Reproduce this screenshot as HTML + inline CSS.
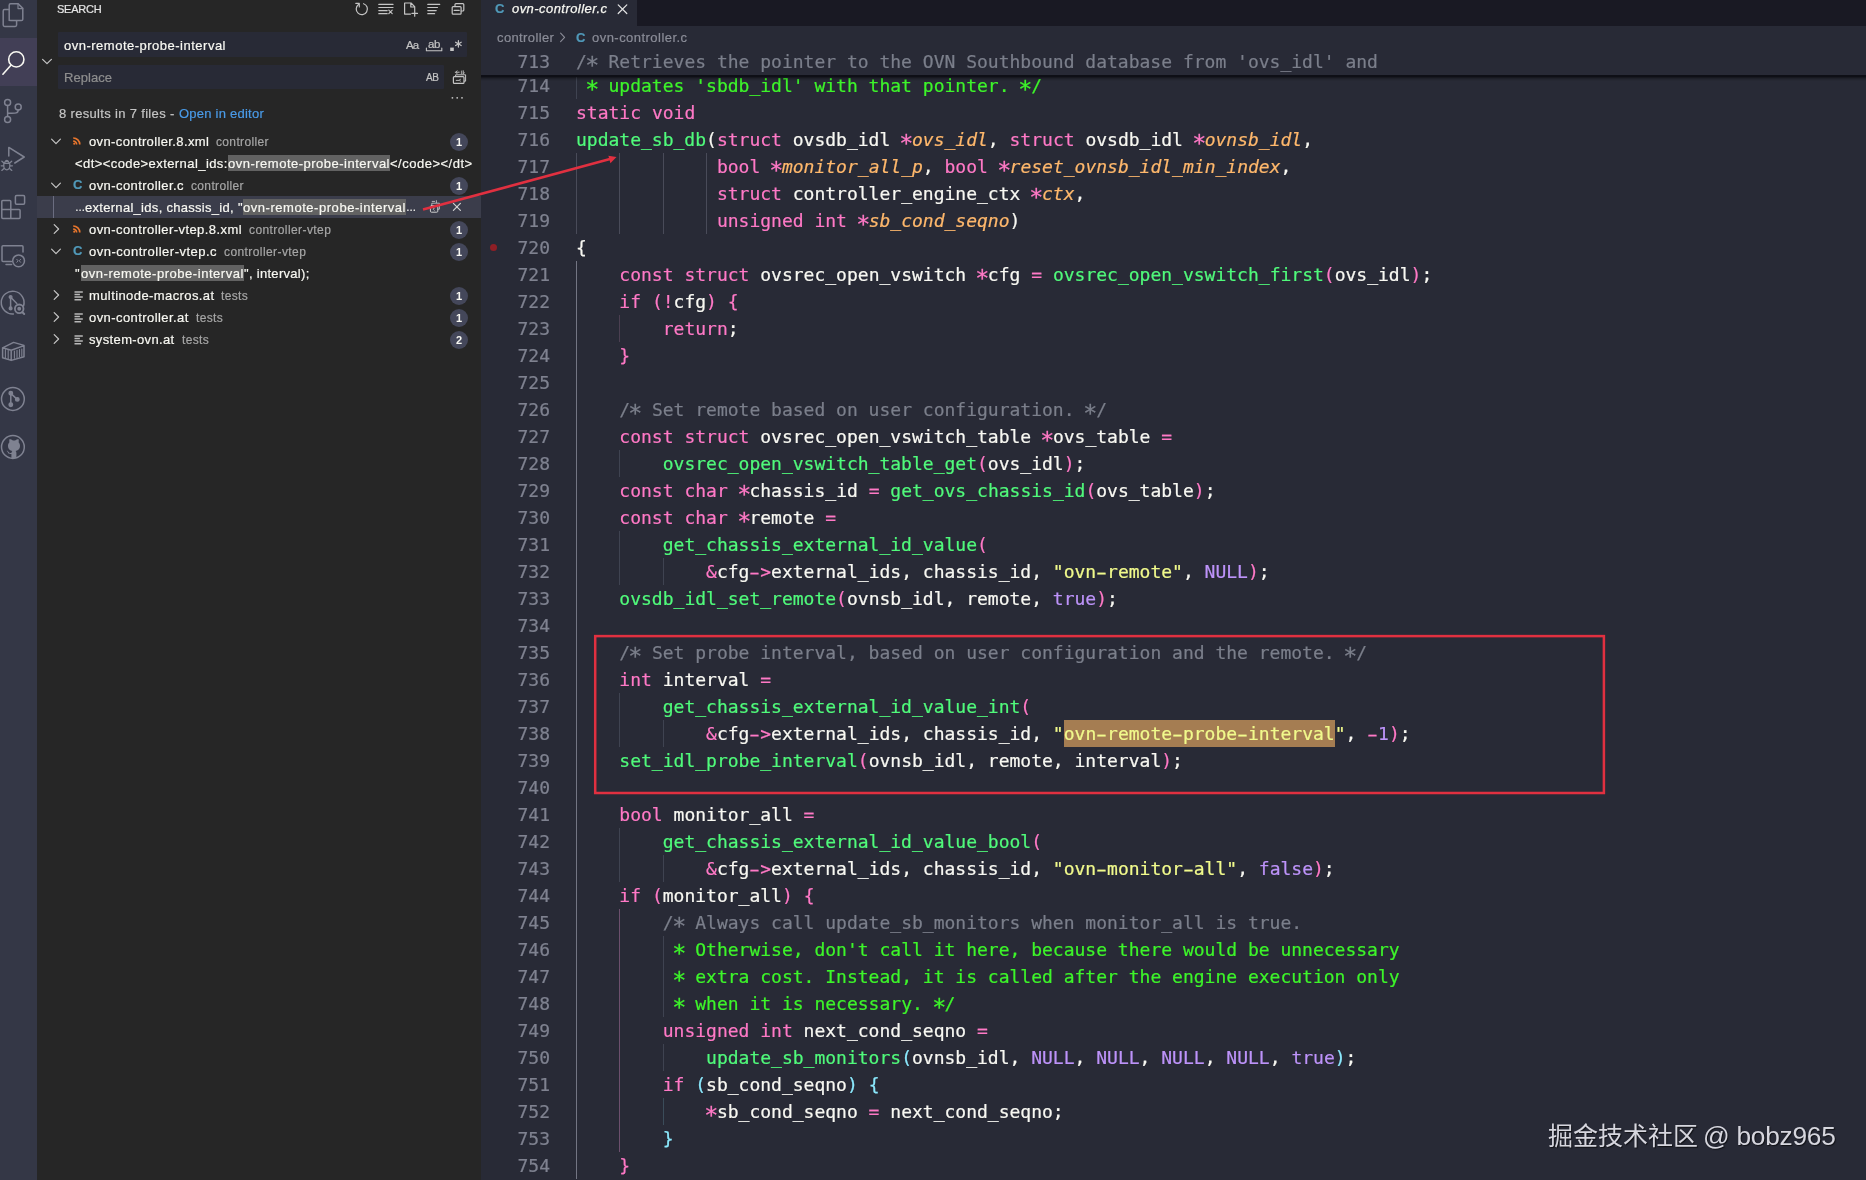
<!DOCTYPE html>
<html lang="en">
<head>
<meta charset="utf-8">
<title>ovn-controller.c</title>
<style>
*{box-sizing:border-box;margin:0;padding:0}
html,body{width:1866px;height:1180px;overflow:hidden;background:#282a36}
body{position:relative;font-family:"Liberation Sans","Noto Sans CJK SC",sans-serif;font-size:13px;color:#f8f8f2}
.abs{position:absolute}
/* activity bar */
#act{position:absolute;left:0;top:0;width:37px;height:1180px;background:#343746}
#act .sel{position:absolute;left:0;top:38px;width:37px;height:48px;background:#423f56}
#act svg{position:absolute;left:0;overflow:visible}
/* sidebar */
#side{position:absolute;left:37px;top:0;width:443.500px;height:1180px;background:#262626}
.t{-webkit-text-stroke:0.2px;position:absolute;white-space:pre;line-height:22px;height:22px;will-change:transform}
.badge{will-change:transform;font-weight:bold;position:absolute;left:413px;width:18px;height:18px;border-radius:9px;background:#44475a;color:#f8f8f2;font-size:11px;line-height:18px;text-align:center}
/* editor */
.ln{-webkit-text-stroke:0.22px;will-change:transform;position:absolute;left:0;width:1866px;height:27px;line-height:27px;white-space:pre;font-family:"DejaVu Sans Mono","Liberation Mono",monospace;font-size:18px;color:#f8f8f2}
.ln .no{position:absolute;left:481px;width:69px;text-align:right;color:#7f8290}
.ln .cd{position:absolute;left:576px}
.k{color:#ff79c6}.f{color:#50fa7b}.s{color:#f1fa8c}.c{color:#bd93f9}.m{color:#7b7f8b}.g{color:#3df52a}
.p{color:#ffb86c;font-style:italic}.b1{color:#f8f8f2}.b2{color:#ff79c6}.b3{color:#8be9fd}
.hy{display:inline-block;transform:scaleX(1.7)}.as{display:inline-block;transform:translateY(2.6px) scale(1.3)}
.gd{position:absolute;width:1px;display:block}
.g0{background:#3f4351}.g0b{background:#494b59}.g1{background:#737583}.g2{background:#6c4f6d}.g2f{background:#4b3f51}.g3{background:#3b4c5a}
</style>
</head>
<body>
<div id="act">
<div class="sel"></div>
<svg width="37" height="480" viewBox="0 0 37 480" fill="none" stroke="#7f8291" stroke-width="1.5" stroke-linejoin="round" stroke-linecap="round">
<!-- files -->
<path d="M9.2 20.6V5.2a1.4 1.4 0 0 1 1.4-1.4h7.6l4.6 4.6v10.8a1.4 1.4 0 0 1-1.4 1.4H10.6a1.4 1.4 0 0 1-1.4-1.4z"/>
<path d="M18 3.9v4.7h4.7" stroke-width="1.2"/>
<path d="M9 9.6H4.6A1.4 1.4 0 0 0 3.2 11v14a1.4 1.4 0 0 0 1.4 1.4h10.6a1.4 1.4 0 0 0 1.4-1.4v-4.3"/>
<!-- search (active) -->
<g stroke="#f8f8f2" stroke-width="1.6"><circle cx="16.3" cy="59.4" r="7.6"/><path d="M10.9 65.2L2.9 74.2"/></g>
<!-- scm -->
<circle cx="7.6" cy="102.4" r="3"/><circle cx="18.2" cy="106.9" r="3"/><circle cx="7.6" cy="119.5" r="3"/>
<path d="M7.6 105.4v11.1M18.2 109.9c0 3.6-3 3.4-10.4 3.4"/>
<!-- debug -->
<path d="M8.8 156V147.4L24.2 157 14.8 163"/>
<g stroke-width="1.3"><ellipse cx="6.8" cy="165.6" rx="3.1" ry="4.2"/><path d="M4.2 163.4h5.2M3.7 165.8H1.2M3.9 163l-2-1.8M4 168.4l-2.2 2M9.9 165.8h2.5M9.7 163l2-1.8M9.6 168.4l2.2 2M5.2 161.6a1.7 1.7 0 0 1 3.2 0"/></g>
<!-- extensions -->
<path d="M1.8 201.4a1 1 0 0 1 1-1h7a1 1 0 0 1 1 1v8h8.300a1 1 0 0 1 1 1v7a1 1 0 0 1-1 1H2.800a1 1 0 0 1-1-1zM1.800 209.400h9v9"/>
<rect x="15.400" y="195.600" width="9.200" height="8.600" rx="1.200"/>
<!-- remote explorer -->
<path d="M23 252V246.800a1 1 0 0 0-1-1H3a1 1 0 0 0-1 1V260.500a1 1 0 0 0 1 1h8.500M6 264.600h5.600"/>
<circle cx="18.600" cy="260.800" r="5.900"/>
<path d="M16.800 259.300l1.300 1.500-1.300 1.500M20.600 259.300l-1.300 1.500 1.300 1.500" stroke-width="1"/>
<!-- gitlens inspect -->
<path d="M23.600 305.800A11.400 11.400 0 1 0 13.400 314"/>
<circle cx="10.600" cy="297" r="1.300" fill="#7f8291"/><circle cx="10.600" cy="308.400" r="1.300" fill="#7f8291"/>
<path d="M10.600 297v11.400M11 297.600l5.800 6"/>
<circle cx="19.200" cy="308.800" r="4.300" stroke-width="1.800"/><circle cx="19.200" cy="308.800" r="1.200" fill="#7f8291"/>
<path d="M22.400 312.200l1.800 1.800" stroke-width="2"/>
<!-- container -->
<path d="M2.600 347.800L13.600 342.400 24 345.400V356.800L11.200 360.400 2.600 357.800zM2.600 347.800L11.200 350.200 24 345.600M11.200 350.200V360.200"/>
<path d="M5.400 349.600v8M8.200 350.400v8.400M14.400 351v7.200M17 350.300v7.200M19.500 349.600v7.200M21.800 349v7.200" stroke-width="1.100"/>
<!-- git graph -->
<circle cx="12.900" cy="399" r="11.400"/>
<circle cx="10.800" cy="393.200" r="1.700" fill="#7f8291"/><circle cx="10.800" cy="404.800" r="1.700" fill="#7f8291"/><circle cx="17.300" cy="399.400" r="1.700" fill="#7f8291"/>
<path d="M10.800 393.200v11.600M11 393.600l6.200 5.800"/>
<!-- github -->
<circle cx="12.900" cy="447" r="11.400"/>
<path fill="#7f8291" stroke="none" d="M12.900 440.600c-.9-.5-2.200-1.400-3.300-1.500-.5 1.100-.5 2.200-.2 3.100-.9 1-1.400 2.200-1.400 3.600 0 3.600 2.100 4.800 4.300 5.200-.5.500-.7 1.100-.8 1.800-.8.300-2.300.4-3.100-1.100-.5-.9-1.400-.9-1.400-.9-.8 0 0 .5 0 .5.600.3.900 1.300.9 1.300.5 1.600 2.500 1.500 3.500 1.300v4.400h5v-5.400c0-.8-.3-1.500-.8-1.900 2.300-.4 4.400-1.600 4.400-5.200 0-1.400-.5-2.600-1.400-3.600.3-.9.300-2-.2-3.100-1.100.1-2.400 1-3.300 1.500-.7-.2-1.500-.2-2.200 0z"/>
</svg>
</div>

<div id="side"></div>
<div class="abs" style="left:37px;top:196px;width:443.500px;height:22px;background:#3b3d4b"></div>
<div class="abs" style="left:53px;top:196px;width:1px;height:22px;background:#6b6d80"></div>
<div class="abs" style="left:57.500px;top:32.300px;width:409.800px;height:24.700px;background:#282a36;border-radius:1px"></div>
<div class="abs" style="left:57.500px;top:64.800px;width:386px;height:24.200px;background:#282a36;border-radius:1px"></div>
<div class="abs" style="left:228.2px;top:155.0px;width:162.0px;height:16px;background:#626262"></div>
<div class="abs" style="left:243.0px;top:199.0px;width:163.0px;height:16px;background:#626262"></div>
<div class="abs" style="left:81.0px;top:265.0px;width:162.9px;height:16px;background:#626262"></div>
<div class="badge" style="left:449.5px;top:133px">1</div>
<div class="badge" style="left:449.5px;top:177px">1</div>
<div class="badge" style="left:449.5px;top:221px">1</div>
<div class="badge" style="left:449.5px;top:243px">1</div>
<div class="badge" style="left:449.5px;top:287px">1</div>
<div class="badge" style="left:449.5px;top:309px">1</div>
<div class="badge" style="left:449.5px;top:331px">2</div>
<div class="t " style="left:57.1px;top:-2.3px;font-size:11px;color:#e6e6e6;height:22px;line-height:22px;letter-spacing:-0.224px;">SEARCH</div>
<div class="t " style="left:64.3px;top:34.5px;font-size:13px;color:#f8f8f2;height:22px;line-height:22px;letter-spacing:0.497px;">ovn-remote-probe-interval</div>
<div class="t " style="left:64.3px;top:67.0px;font-size:13px;color:#8e8e8e;height:22px;line-height:22px;letter-spacing:0.042px;">Replace</div>
<div class="t " style="left:59.2px;top:103.0px;font-size:13px;color:#c4c4c4;height:22px;line-height:22px;letter-spacing:0.326px;">8 results in 7 files - </div>
<div class="t " style="left:178.8px;top:103.0px;font-size:13px;color:#4a9be8;height:22px;line-height:22px;letter-spacing:0.238px;">Open in editor</div>
<div class="t " style="left:89.3px;top:131.0px;font-size:13px;color:#f8f8f2;height:22px;line-height:22px;letter-spacing:0.379px;">ovn-controller.8.xml</div>
<div class="t " style="left:216.0px;top:130.7px;font-size:12px;color:#a6a6a6;height:22px;line-height:22px;letter-spacing:0.344px;">controller</div>
<div class="t " style="left:89.3px;top:175.0px;font-size:13px;color:#f8f8f2;height:22px;line-height:22px;letter-spacing:0.421px;">ovn-controller.c</div>
<div class="t " style="left:190.9px;top:174.7px;font-size:12px;color:#a6a6a6;height:22px;line-height:22px;letter-spacing:0.344px;">controller</div>
<div class="t " style="left:89.3px;top:219.0px;font-size:13px;color:#f8f8f2;height:22px;line-height:22px;letter-spacing:0.427px;">ovn-controller-vtep.8.xml</div>
<div class="t " style="left:248.7px;top:218.7px;font-size:12px;color:#a6a6a6;height:22px;line-height:22px;letter-spacing:0.418px;">controller-vtep</div>
<div class="t " style="left:89.3px;top:241.0px;font-size:13px;color:#f8f8f2;height:22px;line-height:22px;letter-spacing:0.491px;">ovn-controller-vtep.c</div>
<div class="t " style="left:223.5px;top:240.7px;font-size:12px;color:#a6a6a6;height:22px;line-height:22px;letter-spacing:0.418px;">controller-vtep</div>
<div class="t " style="left:89.3px;top:285.0px;font-size:13px;color:#f8f8f2;height:22px;line-height:22px;letter-spacing:0.406px;">multinode-macros.at</div>
<div class="t " style="left:221.2px;top:284.7px;font-size:12px;color:#a6a6a6;height:22px;line-height:22px;letter-spacing:0.331px;">tests</div>
<div class="t " style="left:89.3px;top:307.0px;font-size:13px;color:#f8f8f2;height:22px;line-height:22px;letter-spacing:0.429px;">ovn-controller.at</div>
<div class="t " style="left:195.5px;top:306.7px;font-size:12px;color:#a6a6a6;height:22px;line-height:22px;letter-spacing:0.331px;">tests</div>
<div class="t " style="left:89.3px;top:329.0px;font-size:13px;color:#f8f8f2;height:22px;line-height:22px;letter-spacing:0.360px;">system-ovn.at</div>
<div class="t " style="left:181.9px;top:328.7px;font-size:12px;color:#a6a6a6;height:22px;line-height:22px;letter-spacing:0.331px;">tests</div>
<div class="t " style="left:75.4px;top:153.0px;font-size:13px;color:#f8f8f2;height:22px;line-height:22px;letter-spacing:0.421px;">&lt;dt&gt;&lt;code&gt;external_ids:</div>
<div class="t mh" style="left:228.2px;top:153.0px;font-size:13px;color:#f8f8f2;height:22px;line-height:22px;letter-spacing:0.497px;">ovn-remote-probe-interval</div>
<div class="t " style="left:390.2px;top:153.0px;font-size:13px;color:#f8f8f2;height:22px;line-height:22px;letter-spacing:0.498px;">&lt;/code&gt;&lt;/dt&gt;</div>
<div class="t " style="left:75.0px;top:197.0px;font-size:10.2px;color:#f8f8f2;height:22px;line-height:22px;">…</div>
<div class="t " style="left:85.2px;top:197.0px;font-size:13px;color:#f8f8f2;height:22px;line-height:22px;letter-spacing:0.294px;">external_ids, chassis_id, "</div>
<div class="t mh" style="left:243.0px;top:197.0px;font-size:13px;color:#f8f8f2;height:22px;line-height:22px;letter-spacing:0.537px;">ovn-remote-probe-interval</div>
<div class="t " style="left:405.6px;top:197.0px;font-size:10.2px;color:#f8f8f2;height:22px;line-height:22px;">…</div>
<div class="t " style="left:75.4px;top:263.0px;font-size:13px;color:#f8f8f2;height:22px;line-height:22px;letter-spacing:0.975px;">"</div>
<div class="t mh" style="left:81.0px;top:263.0px;font-size:13px;color:#f8f8f2;height:22px;line-height:22px;letter-spacing:0.533px;">ovn-remote-probe-interval</div>
<div class="t " style="left:243.9px;top:263.0px;font-size:13px;color:#f8f8f2;height:22px;line-height:22px;letter-spacing:0.301px;">", interval);</div>
<svg class="abs" style="left:37px;top:0" width="444" height="360" viewBox="37 0 444 360" fill="none" stroke="#c5c5c5" stroke-width="1.2" stroke-linecap="round" stroke-linejoin="round">
<!-- toolbar: refresh -->
<path d="M358.500 4.500A5.600 5.600 0 1 0 363.600 3.700"/><path d="M355.800 3.400H359.300V6.900" stroke-width="1.100"/>
<!-- clear results -->
<path d="M378.800 4.400h14.200M378.800 7.500h14.200M378.800 10.600h8.400M378.800 13.700h8.400M388.800 10.200l3.400 3.400M392.200 10.200l-3.400 3.400"/>
<!-- new file -->
<path d="M410.500 14.100H404.600V3h6.400l3.700 3.700v3.500M410.800 3.200v3.800h3.800M414.700 10.600v5.600M411.900 13.400h5.600"/>
<!-- view as list -->
<path d="M427.800 4.400h11.900M427.800 7.500h9.700M427.800 10.600h8.400M427.800 13.700h6.800"/>
<!-- collapse all -->
<path d="M455 6.400V4.600a1 1 0 0 1 1-1h6.800a1 1 0 0 1 1 1v5.400a1 1 0 0 1-1 1h-1.600"/>
<rect x="452.200" y="6.600" width="8.900" height="7.600" rx="1"/><path d="M454.200 10.400h5"/>
<!-- toggle replace chevron -->
<path d="M42.600 59.300l4.400 4.400 4.400-4.400" stroke-width="1.200"/>
<!-- match word underline bracket -->
<path d="M426.400 48v2.800h15.400v-2.800" stroke-width="1.100"/>
<!-- regex -->
<rect x="450.200" y="47.600" width="3.600" height="3.400" fill="#c5c5c5" stroke="none"/>
<path d="M458.400 40.500v6.600M455.600 42.200l5.600 3.300M461.200 42.200l-5.600 3.300" stroke-width="1.200"/>
<!-- replace all -->
<rect x="453.400" y="76.600" width="10.600" height="6.800" rx="1"/>
<path d="M455.600 76.400V74.800h10v6.400h-1.400M456.200 72.200h3M455.600 72.200l1.400-1.400M455.600 72.200l1.400 1.400" stroke-width="1"/>
<path d="M461.400 71v2.800M463.200 70.600v3.200m0-1.800c1.600-.6 1.600 2.200 0 1.600" stroke-width=".8"/>
<path d="M456.200 80.400h2.400M460.400 79.200c-1.400-.4-1.400 2.400 0 2" stroke-width=".9"/>
<!-- more ... -->
<g fill="#c5c5c5" stroke="none"><circle cx="452.400" cy="97.800" r=".9"/><circle cx="457.200" cy="97.800" r=".9"/><circle cx="462" cy="97.800" r=".9"/></g>
<!-- row chevrons -->
<g stroke-width="1.200">
<path d="M51.600 139.200l4.400 4.400 4.400-4.400"/>
<path d="M51.600 183.200l4.400 4.400 4.400-4.400"/>
<path d="M54.200 224.600l4.400 4.400-4.400 4.400"/>
<path d="M51.600 249.200l4.400 4.400 4.400-4.400"/>
<path d="M54.200 290.600l4.400 4.400-4.400 4.400"/>
<path d="M54.200 312.600l4.400 4.400-4.400 4.400"/>
<path d="M54.200 334.600l4.400 4.400-4.400 4.400"/>
</g>
<!-- rss icons -->
<g stroke="#e8762d" stroke-width="1.700" stroke-linecap="butt">
<path d="M73.200 138a6.600 6.600 0 0 1 6.600 6.600M73.200 141.200a3.400 3.400 0 0 1 3.400 3.400"/><circle cx="74.200" cy="143.700" r="1" fill="#e8762d" stroke="none"/>
<path d="M73.200 226a6.600 6.600 0 0 1 6.600 6.600M73.200 229.200a3.400 3.400 0 0 1 3.400 3.400"/><circle cx="74.200" cy="231.700" r="1" fill="#e8762d" stroke="none"/>
</g>
<!-- text file icons -->
<g stroke="#b8b8b8" stroke-width="1.500" stroke-linecap="butt">
<path d="M74.500 291.9h8.300M74.500 294.5h5.400M74.500 297.1h8.300M74.500 299.7h6.600"/>
<path d="M74.500 313.9h8.300M74.500 316.5h5.400M74.500 319.1h8.300M74.500 321.7h6.600"/>
<path d="M74.500 335.9h8.300M74.500 338.5h5.400M74.500 341.1h8.300M74.500 343.7h6.600"/>
</g>
<!-- selected row actions -->
<g stroke="#d0d0d0" stroke-width="1">
<rect x="430.400" y="205.600" width="7.400" height="6.600" rx="1"/><path d="M431.800 205.400v-2.200h7.600v6h-1.400M432.200 201.400h2.400M436.400 200.600v2M434.200 210.400c-1.400-.4-1.400-2.600 0-2.200" stroke-width=".8"/>
<path d="M453.400 203.400l7 7M460.400 203.400l-7 7" stroke-width="1.200"/>
</g>
</svg>

<i class="gd g0" style="left:576.0px;top:71.5px;height:27.0px"></i>
<i class="gd g0b" style="left:576.0px;top:152.5px;height:81.0px"></i>
<i class="gd g0b" style="left:619.0px;top:152.5px;height:81.0px"></i>
<i class="gd g0b" style="left:663.0px;top:152.5px;height:81.0px"></i>
<i class="gd g0b" style="left:706.0px;top:152.5px;height:81.0px"></i>
<i class="gd g1" style="left:576.0px;top:260.5px;height:918.0px"></i>
<i class="gd g2f" style="left:619.0px;top:314.5px;height:27.0px"></i>
<i class="gd g0" style="left:619.0px;top:449.5px;height:27.0px"></i>
<i class="gd g0" style="left:619.0px;top:530.5px;height:54.0px"></i>
<i class="gd g0" style="left:663.0px;top:557.5px;height:27.0px"></i>
<i class="gd g0" style="left:619.0px;top:692.5px;height:54.0px"></i>
<i class="gd g0" style="left:663.0px;top:719.5px;height:27.0px"></i>
<i class="gd g0" style="left:619.0px;top:827.5px;height:54.0px"></i>
<i class="gd g0" style="left:663.0px;top:854.5px;height:27.0px"></i>
<i class="gd g2" style="left:619.0px;top:908.5px;height:243.0px"></i>
<i class="gd g0" style="left:663.0px;top:935.5px;height:81.0px"></i>
<i class="gd g0" style="left:663.0px;top:1043.5px;height:27.0px"></i>
<i class="gd g3" style="left:663.0px;top:1097.5px;height:27.0px"></i>
<i class="gd" style="left:1063.8px;top:720px;width:271.0px;height:27px;background:#a57d52"></i>
<div class="ln" style="top:71.5px"><span class="no">714</span><span class="cd"><span class="g"> <span class="as">*</span> updates 'sbdb_idl' with that pointer. <span class="as">*</span>/</span></span></div>
<div class="ln" style="top:98.5px"><span class="no">715</span><span class="cd"><span class="k">static</span> <span class="k">void</span></span></div>
<div class="ln" style="top:125.5px"><span class="no">716</span><span class="cd"><span class="f">update_sb_db</span><span class="b1">(</span><span class="k">struct</span> ovsdb_idl <span class="k"><span class="as">*</span></span><span class="p">ovs_idl</span>, <span class="k">struct</span> ovsdb_idl <span class="k"><span class="as">*</span></span><span class="p">ovnsb_idl</span>,</span></div>
<div class="ln" style="top:152.5px"><span class="no">717</span><span class="cd">             <span class="k">bool</span> <span class="k"><span class="as">*</span></span><span class="p">monitor_all_p</span>, <span class="k">bool</span> <span class="k"><span class="as">*</span></span><span class="p">reset_ovnsb_idl_min_index</span>,</span></div>
<div class="ln" style="top:179.5px"><span class="no">718</span><span class="cd">             <span class="k">struct</span> controller_engine_ctx <span class="k"><span class="as">*</span></span><span class="p">ctx</span>,</span></div>
<div class="ln" style="top:206.5px"><span class="no">719</span><span class="cd">             <span class="k">unsigned</span> <span class="k">int</span> <span class="k"><span class="as">*</span></span><span class="p">sb_cond_seqno</span><span class="b1">)</span></span></div>
<div class="ln" style="top:233.5px"><span class="no">720</span><span class="cd"><span class="b1">{</span></span></div>
<div class="ln" style="top:260.5px"><span class="no">721</span><span class="cd">    <span class="k">const</span> <span class="k">struct</span> ovsrec_open_vswitch <span class="k"><span class="as">*</span></span>cfg <span class="k">=</span> <span class="f">ovsrec_open_vswitch_first</span><span class="b2">(</span>ovs_idl<span class="b2">)</span>;</span></div>
<div class="ln" style="top:287.5px"><span class="no">722</span><span class="cd">    <span class="k">if</span> <span class="b2">(</span><span class="k">!</span>cfg<span class="b2">)</span> <span class="b2">{</span></span></div>
<div class="ln" style="top:314.5px"><span class="no">723</span><span class="cd">        <span class="k">return</span>;</span></div>
<div class="ln" style="top:341.5px"><span class="no">724</span><span class="cd">    <span class="b2">}</span></span></div>
<div class="ln" style="top:368.5px"><span class="no">725</span><span class="cd"></span></div>
<div class="ln" style="top:395.5px"><span class="no">726</span><span class="cd">    <span class="m">/<span class="as">*</span> Set remote based on user configuration. <span class="as">*</span>/</span></span></div>
<div class="ln" style="top:422.5px"><span class="no">727</span><span class="cd">    <span class="k">const</span> <span class="k">struct</span> ovsrec_open_vswitch_table <span class="k"><span class="as">*</span></span>ovs_table <span class="k">=</span></span></div>
<div class="ln" style="top:449.5px"><span class="no">728</span><span class="cd">        <span class="f">ovsrec_open_vswitch_table_get</span><span class="b2">(</span>ovs_idl<span class="b2">)</span>;</span></div>
<div class="ln" style="top:476.5px"><span class="no">729</span><span class="cd">    <span class="k">const</span> <span class="k">char</span> <span class="k"><span class="as">*</span></span>chassis_id <span class="k">=</span> <span class="f">get_ovs_chassis_id</span><span class="b2">(</span>ovs_table<span class="b2">)</span>;</span></div>
<div class="ln" style="top:503.5px"><span class="no">730</span><span class="cd">    <span class="k">const</span> <span class="k">char</span> <span class="k"><span class="as">*</span></span>remote <span class="k">=</span></span></div>
<div class="ln" style="top:530.5px"><span class="no">731</span><span class="cd">        <span class="f">get_chassis_external_id_value</span><span class="b2">(</span></span></div>
<div class="ln" style="top:557.5px"><span class="no">732</span><span class="cd">            <span class="k">&amp;</span>cfg<span class="k"><span class="hy">-</span>&gt;</span>external_ids, chassis_id, <span class="s">"ovn<span class="hy">-</span>remote"</span>, <span class="c">NULL</span><span class="b2">)</span>;</span></div>
<div class="ln" style="top:584.5px"><span class="no">733</span><span class="cd">    <span class="f">ovsdb_idl_set_remote</span><span class="b2">(</span>ovnsb_idl, remote, <span class="c">true</span><span class="b2">)</span>;</span></div>
<div class="ln" style="top:611.5px"><span class="no">734</span><span class="cd"></span></div>
<div class="ln" style="top:638.5px"><span class="no">735</span><span class="cd">    <span class="m">/<span class="as">*</span> Set probe interval, based on user configuration and the remote. <span class="as">*</span>/</span></span></div>
<div class="ln" style="top:665.5px"><span class="no">736</span><span class="cd">    <span class="k">int</span> interval <span class="k">=</span></span></div>
<div class="ln" style="top:692.5px"><span class="no">737</span><span class="cd">        <span class="f">get_chassis_external_id_value_int</span><span class="b2">(</span></span></div>
<div class="ln" style="top:719.5px"><span class="no">738</span><span class="cd">            <span class="k">&amp;</span>cfg<span class="k"><span class="hy">-</span>&gt;</span>external_ids, chassis_id, <span class="s">"</span><span class="s">ovn<span class="hy">-</span>remote<span class="hy">-</span>probe<span class="hy">-</span>interval</span><span class="s">"</span>, <span class="k"><span class="hy">-</span></span><span class="c">1</span><span class="b2">)</span>;</span></div>
<div class="ln" style="top:746.5px"><span class="no">739</span><span class="cd">    <span class="f">set_idl_probe_interval</span><span class="b2">(</span>ovnsb_idl, remote, interval<span class="b2">)</span>;</span></div>
<div class="ln" style="top:773.5px"><span class="no">740</span><span class="cd"></span></div>
<div class="ln" style="top:800.5px"><span class="no">741</span><span class="cd">    <span class="k">bool</span> monitor_all <span class="k">=</span></span></div>
<div class="ln" style="top:827.5px"><span class="no">742</span><span class="cd">        <span class="f">get_chassis_external_id_value_bool</span><span class="b2">(</span></span></div>
<div class="ln" style="top:854.5px"><span class="no">743</span><span class="cd">            <span class="k">&amp;</span>cfg<span class="k"><span class="hy">-</span>&gt;</span>external_ids, chassis_id, <span class="s">"ovn<span class="hy">-</span>monitor<span class="hy">-</span>all"</span>, <span class="c">false</span><span class="b2">)</span>;</span></div>
<div class="ln" style="top:881.5px"><span class="no">744</span><span class="cd">    <span class="k">if</span> <span class="b2">(</span>monitor_all<span class="b2">)</span> <span class="b2">{</span></span></div>
<div class="ln" style="top:908.5px"><span class="no">745</span><span class="cd">        <span class="m">/<span class="as">*</span> Always call update_sb_monitors when monitor_all is true.</span></span></div>
<div class="ln" style="top:935.5px"><span class="no">746</span><span class="cd">        <span class="g"> <span class="as">*</span> Otherwise, don't call it here, because there would be unnecessary</span></span></div>
<div class="ln" style="top:962.5px"><span class="no">747</span><span class="cd">        <span class="g"> <span class="as">*</span> extra cost. Instead, it is called after the engine execution only</span></span></div>
<div class="ln" style="top:989.5px"><span class="no">748</span><span class="cd">        <span class="g"> <span class="as">*</span> when it is necessary. <span class="as">*</span>/</span></span></div>
<div class="ln" style="top:1016.5px"><span class="no">749</span><span class="cd">        <span class="k">unsigned</span> <span class="k">int</span> next_cond_seqno <span class="k">=</span></span></div>
<div class="ln" style="top:1043.5px"><span class="no">750</span><span class="cd">            <span class="f">update_sb_monitors</span><span class="b3">(</span>ovnsb_idl, <span class="c">NULL</span>, <span class="c">NULL</span>, <span class="c">NULL</span>, <span class="c">NULL</span>, <span class="c">true</span><span class="b3">)</span>;</span></div>
<div class="ln" style="top:1070.5px"><span class="no">751</span><span class="cd">        <span class="k">if</span> <span class="b3">(</span>sb_cond_seqno<span class="b3">)</span> <span class="b3">{</span></span></div>
<div class="ln" style="top:1097.5px"><span class="no">752</span><span class="cd">            <span class="k"><span class="as">*</span></span>sb_cond_seqno <span class="k">=</span> next_cond_seqno;</span></div>
<div class="ln" style="top:1124.5px"><span class="no">753</span><span class="cd">        <span class="b3">}</span></span></div>
<div class="ln" style="top:1151.5px"><span class="no">754</span><span class="cd">    <span class="b2">}</span></span></div>
<div class="abs" style="left:480.500px;top:0;width:1386px;height:26px;background:#191923"></div>
<div class="abs" style="left:480.500px;top:0;width:156.500px;height:26px;background:#282a36"></div>
<div class="abs" style="left:481px;top:26px;width:1385px;height:49px;background:#282a36"></div>
<div class="abs" style="left:481px;top:76.500px;width:1385px;height:4px;background:linear-gradient(rgba(0,0,0,.5),rgba(0,0,0,.15) 50%,rgba(0,0,0,0))"></div>
<div class="abs" style="left:481px;top:74.600px;width:1385px;height:2px;background:#0e0f16"></div>
<div class="ln" style="top:47.500px"><span class="no">713</span><span class="cd"><span class="m">/<span class="as">*</span> Retrieves the pointer to the OVN Southbound database from 'ovs_idl' and</span></span></div>
<div class="t " style="left:512.2px;top:-1.8px;font-size:13px;color:#f8f8f2;height:22px;line-height:22px;letter-spacing:0.444px;font-style:italic;-webkit-text-stroke:0.25px;">ovn-controller.c</div>
<div class="t " style="left:496.5px;top:27.0px;font-size:13px;color:#8b8d98;height:22px;line-height:22px;letter-spacing:0.383px;">controller</div>
<div class="t " style="left:591.9px;top:27.0px;font-size:13px;color:#8b8d98;height:22px;line-height:22px;letter-spacing:0.465px;">ovn-controller.c</div>
<div class="t " style="left:495.2px;top:-2.2px;font-size:13px;color:#519aba;height:22px;line-height:22px;font-weight:bold;">C</div>
<div class="t " style="left:575.6px;top:26.7px;font-size:13px;color:#519aba;height:22px;line-height:22px;font-weight:bold;">C</div>
<div class="t " style="left:72.6px;top:174.1px;font-size:13px;color:#519aba;height:22px;line-height:22px;font-weight:bold;">C</div>
<div class="t " style="left:72.6px;top:240.1px;font-size:13px;color:#519aba;height:22px;line-height:22px;font-weight:bold;">C</div>
<div class="t " style="left:406.1px;top:34.3px;font-size:11.5px;color:#c5c5c5;height:22px;line-height:22px;letter-spacing:-1.039px;">Aa</div>
<div class="t " style="left:428.2px;top:32.8px;font-size:11.5px;color:#c5c5c5;height:22px;line-height:22px;letter-spacing:-0.398px;">ab</div>
<div class="t " style="left:425.9px;top:66.5px;font-size:10px;color:#c5c5c5;height:22px;line-height:22px;letter-spacing:-0.372px;">AB</div>
<div class="t " style="left:1548.0px;top:1117.5px;font-size:25px;color:#d6d6de;height:36px;line-height:36px;text-shadow:1px 1px 1px rgba(0,0,0,.6);-webkit-text-stroke:0;">掘金技术社区</div>
<div class="t " style="left:1703.3px;top:1117.8px;font-size:26.3px;color:#d6d6de;height:36px;line-height:36px;letter-spacing:-0.267px;text-shadow:1px 1px 1px rgba(0,0,0,.6);-webkit-text-stroke:0;">@ bobz965</div>
<svg class="abs" style="left:481px;top:0" width="300" height="50" viewBox="481 0 300 50" fill="none" stroke-linecap="round" stroke-linejoin="round">
<path d="M618.200 4.900l8.600 8.600M626.800 4.900l-8.600 8.600" stroke="#e4e4e4" stroke-width="1.200"/>
<path d="M560.600 33.200l4 4.200-4 4.200" stroke="#8b8d98" stroke-width="1.100"/>
</svg>
<div class="abs" style="left:489.600px;top:244.100px;width:7.400px;height:7.400px;border-radius:4px;background:#8f1f26"></div>
<svg class="abs" style="left:0;top:0" width="1866" height="1180" viewBox="0 0 1866 1180" fill="none">
<rect x="595.200" y="636.100" width="1008.700" height="156.900" stroke="#e13040" stroke-width="2.500"/>
<path d="M423 209.600L610 159" stroke="#e13040" stroke-width="2.600"/>
<path d="M616.500 157.100L608.400 155.700 610.400 163.300z" fill="#e13040"/>
</svg>

</body>
</html>
